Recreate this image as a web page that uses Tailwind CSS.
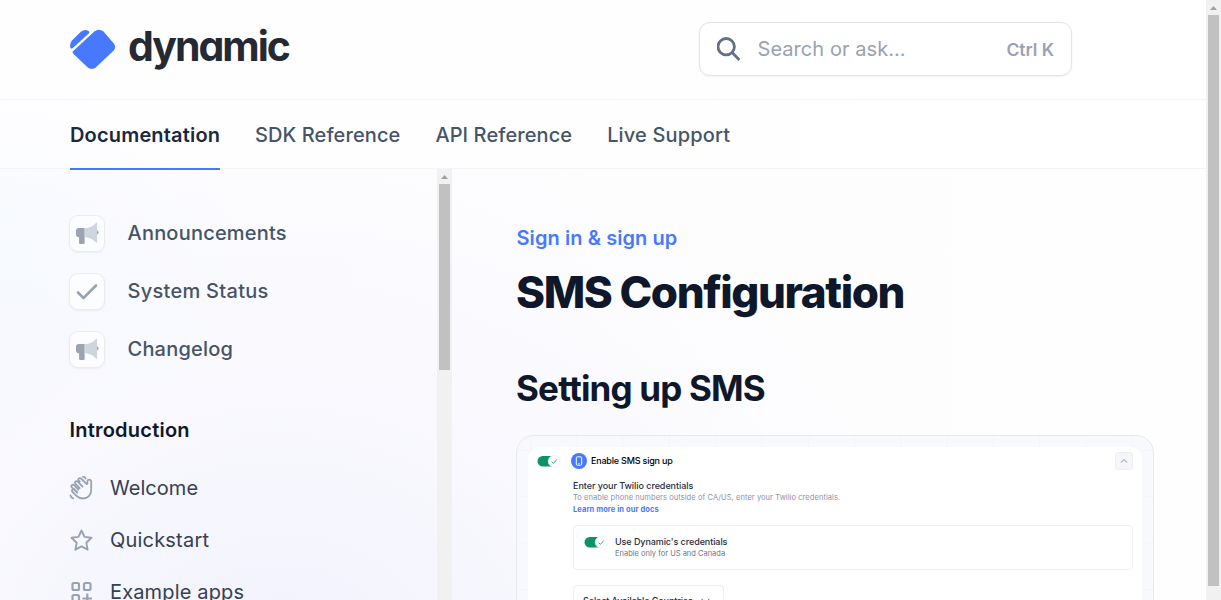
<!DOCTYPE html>
<html lang="en">
<head>
<meta charset="utf-8">
<title>SMS Configuration</title>
<script src="https://cdn.jsdelivr.net/npm/@tailwindcss/browser@4"></script>
</head>
<body class="flex h-[600px] w-[1221px] overflow-hidden bg-white bg-[radial-gradient(ellipse_640px_520px_at_280px_660px,#f1f2fd_0%,#f9f9fe_55%,#ffffff00_100%),radial-gradient(ellipse_330px_480px_at_0px_560px,#edf5fd_0%,#ffffff00_100%),linear-gradient(to_right,#fcfcff,#fefefe)] font-['Inter',sans-serif] text-[20px] text-[#475467]">
<svg class="hidden">
  <symbol id="horn" viewBox="0 0 24 24">
    <path d="M9.500 6.500C14 6 18 4.500 20.500 1.200Q21 .6 22 .6V21.600Q21 21.600 20.500 21C18 18 14 16.500 9.500 15.700Z" fill="#cfd5df"/>
    <path d="M22 8.500q1.500.6 1.500 2.300T22 13.200Z" fill="#9ca3af"/>
    <path d="M3 6.300H9V22q0 1-1 1H4.500q-1.300 0-1.300-1.200V16Q0 15.700 0 13V9Q0 6.300 3 6.300Z" fill="#9ca3b1"/>
  </symbol>
  <symbol id="toggle" viewBox="0 0 24 13">
    <rect x=".5" y="1" width="21" height="10.500" rx="5.250" fill="#0d9268"/>
    <circle cx="17.200" cy="6.300" r="6" fill="#fff" stroke="#e8eaf0" stroke-width=".6"/>
    <path d="m14.600 6.700 1.800 1.700 3.500-4" fill="none" stroke="#35a583"/>
  </symbol>
</svg>
<div class="flex w-[1206px] shrink-0 flex-col">
  <header class="flex h-[100px] shrink-0 items-start border-b border-[#f4f5f6] bg-white/50 pl-[70px]">
    <div class="flex w-[629px] items-start">
      <svg class="mt-[29px] h-[41px] w-[46px]" viewBox="0 0 46 41" fill="#4779ff">
        <path d="M3 22.200 24.300 2.600Q29 -1 33.500 2.500L44 14.800Q46.500 18.200 43.800 21.500L26 38.200Q21.800 41.800 17.500 38.200L3.500 25Q2 23.400 3 22.200Z"/>
        <path d="M.3 18.500Q-.5 14.500 2 11.500L10.500 3Q15-.5 18.500 2Q20.200 3.300 18.800 4.600L2.800 19Q.8 20.400.3 18.500Z"/>
      </svg>
      <span class="ml-[12px] mt-[20px] text-[41px] leading-[52px] font-bold tracking-[-2px] text-[#252933] [font-feature-settings:'cv11']">dynamic</span>
    </div>
    <div class="mt-[22px] flex h-[54px] w-[373px] items-center rounded-[11px] border border-[#e3e5e9] bg-white pl-[17px] pr-[17px] shadow-xs">
      <svg class="h-[24px] w-[24px]" viewBox="0 0 24 24" fill="none" stroke="#667085" stroke-width="2.800"><circle cx="9.200" cy="9.700" r="8.200"/><path d="m15.100 15.600 7.300 7.300"/></svg>
      <span class="ml-[16.500px] grow text-[20px] tracking-[0.060px] text-[#98a2b3]">Search or ask...</span>
      <span class="mt-[2px] text-[17.500px] font-semibold text-[#98a2b3]">Ctrl K</span>
    </div>
  </header>
  <nav class="flex h-[69px] shrink-0 gap-[35px] border-b border-[#f3f4f6] bg-white/50 pl-[70px] font-medium leading-[70px]">
    <a class="h-[70px] w-[150px] border-b-2 border-[#4779ff] font-semibold tracking-[0.170px] text-[#1d2939]">Documentation</a>
    <a class="tracking-[0.100px]">SDK Reference</a><a class="tracking-[0.100px]">API Reference</a><a class="tracking-[0.150px]">Live Support</a>
  </nav>
  <div class="flex min-h-0 grow">
    <aside class="flex w-[437px] shrink-0 flex-col overflow-hidden pl-[69px] pt-[46px]">
      <div class="flex flex-col gap-[21px] font-medium tracking-[0.210px]">
        <a class="flex h-[37px] items-center gap-[22px]"><span class="flex h-[37px] w-[36px] items-center justify-center rounded-[9px] border border-[#e9ebee] bg-white/60 pl-[1px] shadow-xs"><svg class="h-[23px] w-[23px]"><use href="#horn"/></svg></span><span class="pb-[2px] pl-[0.500px]">Announcements</span></a>
        <a class="flex h-[37px] items-center gap-[22px]"><span class="flex h-[37px] w-[36px] items-center justify-center rounded-[9px] border border-[#e9ebee] bg-white/60 shadow-xs"><svg class="h-[24px] w-[24px]" viewBox="0 0 24 24" fill="none" stroke="#98a2b3" stroke-width="2.600" stroke-linecap="round" stroke-linejoin="round"><path d="m3 12.500 5.500 5.500L21 5.500"/></svg></span><span class="pb-[2px] pl-[0.500px] tracking-[0.280px]">System Status</span></a>
        <a class="flex h-[37px] items-center gap-[22px]"><span class="flex h-[37px] w-[36px] items-center justify-center rounded-[9px] border border-[#e9ebee] bg-white/60 pl-[1px] shadow-xs"><svg class="h-[23px] w-[23px]"><use href="#horn"/></svg></span><span class="pb-[2px] pl-[0.500px]">Changelog</span></a>
      </div>
      <h5 class="mt-[47px] pl-[0.500px] leading-[30px] font-semibold tracking-[0.220px] text-slate-900">Introduction</h5>
      <div class="mt-[17px] flex flex-col tracking-[0.150px] text-[#344054]">
        <a class="flex h-[52px] shrink-0 items-center gap-[17px]"><svg class="h-[24px] w-[24px]" viewBox="0 0 24 24" fill="none" stroke="#98a2b3" stroke-width="1.800" stroke-linecap="round" stroke-linejoin="round"><path d="m13.500 10.500-4.800-4.800a1.500 1.500 0 0 0-2.200 2.200l4.200 4.200M10.700 5.500l-.9-.9a1.500 1.500 0 0 1 2.200-2.100l5.400 5.300c.6.600 1 .2 1-.4V5.200c0-2.200 3.800-2 3.800.6v8.400c0 5-3.500 8.300-8 8.300-3.200 0-5-1-6.700-2.700l-4-4a1.500 1.500 0 0 1 2.200-2.200l2.500 2.500M9.300 13.500 5 9.200a1.500 1.500 0 0 0-2.200 2.200l5.400 5.300M14 .9c1.400-.3 2.300.7 2.500 1.700M1.500 19.500c.3 1.500 1.200 2.500 2.700 2.900"/></svg><span class="tracking-[0.050px]">Welcome</span></a>
        <a class="flex h-[52px] shrink-0 items-center gap-[17px]"><svg class="h-[24px] w-[24px]" viewBox="0 0 24 24" fill="none" stroke="#98a2b3" stroke-width="1.900" stroke-linejoin="round"><path d="m12.500 2.500 3 6.400 7 .9-5.200 4.900 1.300 7-6.100-3.400-6.100 3.400 1.300-7-5.200-4.900 7-.9Z"/></svg><span class="tracking-[0.200px]">Quickstart</span></a>
        <a class="flex h-[52px] shrink-0 items-center gap-[17px]"><svg class="h-[24px] w-[24px]" viewBox="0 0 24 24" fill="none" stroke="#98a2b3" stroke-width="2.200"><rect x="3.500" y="3" width="6.500" height="7" rx="1.500"/><rect x="15" y="3" width="6.500" height="7" rx="1.500"/><rect x="3.500" y="15" width="6.500" height="7" rx="1.500"/><path d="M18.300 13.500v10M13.500 18.500h9.500"/></svg>Example apps</a>
      </div>
    </aside>
    <div class="flex w-[15px] shrink-0 flex-col items-center bg-[#f1f1f1]">
      <svg class="h-[15px] w-[15px] shrink-0" viewBox="0 0 15 15"><path d="M4 10h7L7.500 6Z" fill="#a0a0a0"/></svg>
      <div class="h-[186px] w-[11px] bg-[#c1c1c1]"></div>
    </div>
    <main class="flex grow flex-col overflow-hidden pl-[64px] pt-[54px]">
      <div class="pl-[0.500px] leading-[30px] font-semibold tracking-[0.080px] text-[#4779ff]">Sign in &amp; sign up</div>
      <h1 class="mt-[12px] text-[44px] leading-[54px] font-extrabold tracking-[-1.420px] text-slate-900">SMS Configuration</h1>
      <h2 class="mt-[46px] text-[35px] leading-[46px] font-bold tracking-[-0.820px] text-slate-900">Setting up SMS</h2>
      <div class="mt-[24px] h-[300px] w-[638px] shrink-0 rounded-[18px] border border-[#e8e9ee] bg-[#f8f9fd] bg-[linear-gradient(to_right,#f3f5f9_1px,transparent_1px),linear-gradient(to_bottom,#f3f5f9_1px,transparent_1px)] bg-[size:46.300px_46.300px] bg-[position:13px_14px] pl-[11px] pt-[11px] text-[#282c3a]">
        <div class="h-[300px] w-[614px] rounded-t-[12px] bg-white pl-[9px] pr-[9px] pt-[5px]">
          <div class="flex h-[18px] items-center">
            <svg class="h-[13px] w-[24px]"><use href="#toggle"/></svg>
            <svg class="ml-[10px] h-[16px] w-[16px]" viewBox="0 0 16 16"><circle cx="8" cy="8" r="8" fill="#4779ff"/><rect x="5.300" y="3.800" width="5.400" height="8.400" rx="1" fill="none" stroke="#fff"/><path d="M7.300 10.700h1.400" stroke="#fff"/></svg>
            <span class="ml-[4px] grow text-[9px] font-medium tracking-[-0.200px] text-black">Enable SMS sign up</span>
            <svg class="h-[18px] w-[18px]" viewBox="0 0 18 18"><rect x=".5" y=".5" width="17" height="17" rx="2.500" fill="#f5f6f9" stroke="#edeef2"/><path d="m6 10.500 3-3 3 3" fill="none" stroke="#b4b8cf" stroke-width="1.200"/></svg>
          </div>
          <div class="ml-[36px] mt-[10px]">
            <div class="text-[9px] leading-[12px] font-medium tracking-[-0.050px]">Enter your Twilio credentials</div>
            <div class="text-[7.500px] leading-[12px] tracking-[0.070px] text-[#8c91ad]">To enable phone numbers outside of CA/US, enter your Twilio credentials.</div>
            <div class="text-[7.500px] leading-[12px] font-bold tracking-[0.090px] text-[#4779ff]">Learn more in our docs</div>
            <div class="mt-[9px] flex h-[45px] items-center rounded-[4px] border border-[#eceef4] pl-[10px]">
              <svg class="mb-[10px] h-[13px] w-[24px]"><use href="#toggle"/></svg>
              <div class="ml-[7px]"><div class="text-[9px] leading-[12px] font-medium tracking-[-0.080px]">Use Dynamic's credentials</div><div class="text-[7.500px] leading-[12px] text-[#6f748c]">Enable only for US and Canada</div></div>
            </div>
            <div class="mt-[15px] flex h-[32px] w-[151px] items-center rounded-[4px] border border-[#eceef4] pl-[9px] text-[9px] font-medium tracking-[-0.100px]"><span class="w-[118px]">Select Available Countries</span><svg class="h-[8px] w-[9px]" viewBox="0 0 9 8" fill="none" stroke="#555a70"><path d="m.5 1.800 4 4 4-4"/></svg></div>
          </div>
        </div>
      </div>
    </main>
  </div>
</div>
<div class="flex w-[15px] shrink-0 flex-col items-center bg-[#f1f1f1]">
  <svg class="h-[15px] w-[15px] shrink-0" viewBox="0 0 15 15"><path d="M4 10h7L7.500 6Z" fill="#a0a0a0"/></svg>
  <div class="h-[571px] w-[11px] bg-[#c1c1c1]"></div>
</div>
</body>
</html>
